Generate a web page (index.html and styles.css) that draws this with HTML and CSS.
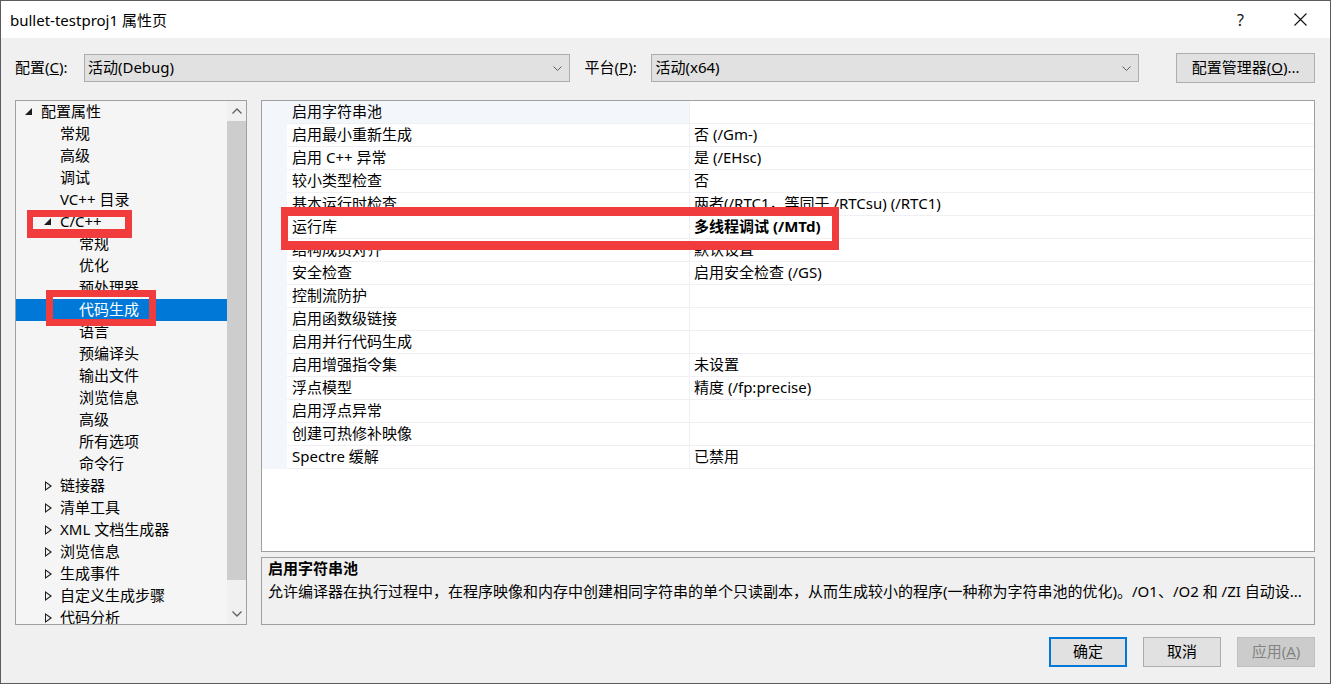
FILE: index.html
```html
<!DOCTYPE html>
<html lang="zh-CN">
<head>
    <meta charset="UTF-8">
    <title>bullet-testproj1 属性页</title>
    <link rel="stylesheet" href="styles.css">
</head>
<body>

<div class="window">
    <div class="titlebar">
        <span class="title">bullet-testproj1 属性页</span>
        <span class="help">?</span>
        <svg class="close" width="13" height="13" viewBox="0 0 13 13"><path d="M0.5 0.5 L12.5 12.5 M12.5 0.5 L0.5 12.5" stroke="#111" stroke-width="1.1" fill="none"/></svg>
    </div>

    <div class="content">
        <!-- config / platform row -->
        <div class="config-row">
            <span class="label label-config">配置(<u>C</u>):</span>
            <div class="combo combo-config">
                <span>活动(Debug)</span>
                <svg width="9" height="5" viewBox="0 0 9 5"><path d="M0.5 0.5 L4.5 4.5 L8.5 0.5" stroke="#606060" fill="none"/></svg>
            </div>
            <span class="label label-platform">平台(<u>P</u>):</span>
            <div class="combo combo-platform">
                <span>活动(x64)</span>
                <svg width="9" height="5" viewBox="0 0 9 5"><path d="M0.5 0.5 L4.5 4.5 L8.5 0.5" stroke="#606060" fill="none"/></svg>
            </div>
            <button class="btn btn-manager">配置管理器(<u>O</u>)...</button>
        </div>

        <div class="main">
            <!-- left tree -->
            <div class="tree">
                <div class="tree-list">
                    <div class="node lv1"><span class="tog open"></span>配置属性</div>
                    <div class="node lv2"><span class="tog"></span>常规</div>
                    <div class="node lv2"><span class="tog"></span>高级</div>
                    <div class="node lv2"><span class="tog"></span>调试</div>
                    <div class="node lv2"><span class="tog"></span>VC++ 目录</div>
                    <div class="node lv2"><span class="tog open"></span>C/C++</div>
                    <div class="node lv3"><span class="tog"></span>常规</div>
                    <div class="node lv3"><span class="tog"></span>优化</div>
                    <div class="node lv3"><span class="tog"></span>预处理器</div>
                    <div class="node lv3 selected"><span class="tog"></span>代码生成</div>
                    <div class="node lv3"><span class="tog"></span>语言</div>
                    <div class="node lv3"><span class="tog"></span>预编译头</div>
                    <div class="node lv3"><span class="tog"></span>输出文件</div>
                    <div class="node lv3"><span class="tog"></span>浏览信息</div>
                    <div class="node lv3"><span class="tog"></span>高级</div>
                    <div class="node lv3"><span class="tog"></span>所有选项</div>
                    <div class="node lv3"><span class="tog"></span>命令行</div>
                    <div class="node lv2"><span class="tog closed"></span>链接器</div>
                    <div class="node lv2"><span class="tog closed"></span>清单工具</div>
                    <div class="node lv2"><span class="tog closed"></span>XML 文档生成器</div>
                    <div class="node lv2"><span class="tog closed"></span>浏览信息</div>
                    <div class="node lv2"><span class="tog closed"></span>生成事件</div>
                    <div class="node lv2"><span class="tog closed"></span>自定义生成步骤</div>
                    <div class="node lv2"><span class="tog closed"></span>代码分析</div>
                </div>
                <div class="scrollbar">
                    <div class="sb-btn">
                        <svg width="10" height="6" viewBox="0 0 10 6"><path d="M0.5 5.5 L5 1 L9.5 5.5" stroke="#606060" stroke-width="1.3" fill="none"/></svg>
                    </div>
                    <div class="sb-track"><div class="sb-thumb"></div></div>
                    <div class="sb-btn">
                        <svg width="10" height="6" viewBox="0 0 10 6"><path d="M0.5 0.5 L5 5 L9.5 0.5" stroke="#606060" stroke-width="1.3" fill="none"/></svg>
                    </div>
                </div>
            </div>

            <!-- right property grid + description -->
            <div class="right">
                <div class="grid">
                    <div class="prop current"><span class="gut"></span><span class="name">启用字符串池</span><span class="val"></span></div>
                    <div class="prop"><span class="gut"></span><span class="name">启用最小重新生成</span><span class="val">否 (/Gm-)</span></div>
                    <div class="prop"><span class="gut"></span><span class="name">启用 C++ 异常</span><span class="val">是 (/EHsc)</span></div>
                    <div class="prop"><span class="gut"></span><span class="name">较小类型检查</span><span class="val">否</span></div>
                    <div class="prop"><span class="gut"></span><span class="name">基本运行时检查</span><span class="val">两者(/RTC1，等同于 /RTCsu) (/RTC1)</span></div>
                    <div class="prop"><span class="gut"></span><span class="name">运行库</span><span class="val bold">多线程调试 (/MTd)</span></div>
                    <div class="prop"><span class="gut"></span><span class="name">结构成员对齐</span><span class="val">默认设置</span></div>
                    <div class="prop"><span class="gut"></span><span class="name">安全检查</span><span class="val">启用安全检查 (/GS)</span></div>
                    <div class="prop"><span class="gut"></span><span class="name">控制流防护</span><span class="val"></span></div>
                    <div class="prop"><span class="gut"></span><span class="name">启用函数级链接</span><span class="val"></span></div>
                    <div class="prop"><span class="gut"></span><span class="name">启用并行代码生成</span><span class="val"></span></div>
                    <div class="prop"><span class="gut"></span><span class="name">启用增强指令集</span><span class="val">未设置</span></div>
                    <div class="prop"><span class="gut"></span><span class="name">浮点模型</span><span class="val">精度 (/fp:precise)</span></div>
                    <div class="prop"><span class="gut"></span><span class="name">启用浮点异常</span><span class="val"></span></div>
                    <div class="prop"><span class="gut"></span><span class="name">创建可热修补映像</span><span class="val"></span></div>
                    <div class="prop"><span class="gut"></span><span class="name">Spectre 缓解</span><span class="val">已禁用</span></div>
                </div>
                <div class="desc">
                    <div class="desc-title">启用字符串池</div>
                    <div class="desc-text">允许编译器在执行过程中，在程序映像和内存中创建相同字符串的单个只读副本，从而生成较小的程序(一种称为字符串池的优化)。/O1、/O2 和 /ZI 自动设...</div>
                </div>
            </div>
        </div>

        <div class="footer">
            <button class="btn btn-ok">确定</button>
            <button class="btn">取消</button>
            <button class="btn btn-disabled">应用(<u>A</u>)</button>
        </div>
    </div>

    <!-- red annotation boxes drawn over the dialog -->
    <div class="mark mark-cpp"></div>
    <div class="mark mark-codegen"></div>
    <div class="mark mark-runtime"></div>
</div>

</body>
</html>
```

FILE: styles.css
```css
body {
    margin: 0;
    background: #ffffff;
    font-family: "Noto Sans", "Noto Sans CJK SC", sans-serif;
    font-size: 15px;
    color: #000000;
}

.window {
    position: relative;
    width: 1331px;
    height: 684px;
    box-sizing: border-box;
    border: 1px solid #5c5c5c;
    background: #f0f0f0;
    display: flex;
    flex-direction: column;
    overflow: hidden;
}

.titlebar {
    height: 37px;
    background: #ffffff;
    display: flex;
    align-items: center;
    padding-left: 9px;
    padding-right: 23px;
}

.title {
    flex: 1;
    font-size: 15px;
    line-height: 20px;
}

.help {
    font-size: 16px;
    margin-right: 50px;
    color: #111;
}

.close {
    display: block;
}

.content {
    flex: 1;
    display: flex;
    flex-direction: column;
    padding: 15px 15px 0 14px;
}

/* top row */
.config-row {
    display: flex;
    align-items: center;
    height: 30px;
}

.label {
    line-height: 20px;
    margin-bottom: 3px;
}

.label-config { width: 69px; }
.label-platform { width: 67px; margin-left: 15px; }

.combo {
    height: 28px;
    box-sizing: border-box;
    background: #e1e1e1;
    border: 1px solid #adadad;
    display: flex;
    align-items: center;
    justify-content: space-between;
    padding: 0 7px 2px 3px;
    line-height: 20px;
}

.combo svg { display: block; margin-top: 2px; }

.combo-config { width: 486px; }
.combo-platform { width: 488px; }

.btn {
    font-family: inherit;
    font-size: 15px;
    color: #000;
    background: #e1e1e1;
    border: 1px solid #adadad;
    height: 30px;
    width: 78px;
    padding: 0 0 3px 0;
    line-height: 20px;
}

.btn-manager {
    width: 139px;
    margin-left: 37px;
}

/* main area */
.main {
    display: flex;
    margin-top: 17px;
    height: 525px;
}

.tree {
    width: 232px;
    box-sizing: border-box;
    border: 1px solid #a0a0a0;
    background: #f5f5f5;
    display: flex;
    overflow: hidden;
}

.tree-list {
    flex: 1;
    overflow: hidden;
}

.node {
    height: 22px;
    line-height: 20px;
    display: flex;
    align-items: flex-start;
    white-space: nowrap;
}

.node.lv1 { padding-left: 9px; }
.node.lv2 { padding-left: 28px; }
.node.lv3 { padding-left: 47px; }

.node.selected {
    background: #0078d7;
    color: #ffffff;
}

.tog {
    width: 16px;
    height: 22px;
    flex: none;
    position: relative;
}

.tog.open::before {
    content: "";
    position: absolute;
    left: 0;
    top: 7px;
    width: 0;
    height: 0;
    border-left: 7px solid transparent;
    border-bottom: 7px solid #1e1e1e;
}

.tog.closed::before {
    content: "";
    position: absolute;
    left: 1px;
    top: 6px;
    width: 0;
    height: 0;
    border-top: 5px solid transparent;
    border-bottom: 5px solid transparent;
    border-left: 7px solid #1e1e1e;
}

.tog.closed::after {
    content: "";
    position: absolute;
    left: 2px;
    top: 8px;
    width: 0;
    height: 0;
    border-top: 3px solid transparent;
    border-bottom: 3px solid transparent;
    border-left: 4px solid #f5f5f5;
}

.scrollbar {
    width: 19px;
    background: #f0f0f0;
    display: flex;
    flex-direction: column;
}

.sb-btn {
    height: 20px;
    display: flex;
    align-items: center;
    justify-content: center;
}

.sb-track {
    flex: 1;
}

.sb-thumb {
    height: 459px;
    background: #cdcdcd;
}

.right {
    flex: 1;
    margin-left: 14px;
    display: flex;
    flex-direction: column;
}

.grid {
    height: 452px;
    box-sizing: border-box;
    border: 1px solid #a0a0a0;
    background: #ffffff;
}

.prop {
    display: grid;
    grid-template-columns: 25px 402px 1fr;
    height: 23px;
    line-height: 20px;
    white-space: nowrap;
}

.prop .gut {
    background: #f3f6fb;
}

.prop .name {
    padding-left: 5px;
    border-bottom: 1px solid #f0f0f4;
}

.prop .val {
    padding-left: 4px;
    border-left: 1px solid #f0f0f4;
    border-bottom: 1px solid #f0f0f4;
    overflow: hidden;
}

.prop.current .name {
    background: #f3f6fb;
}

.bold { font-weight: bold; }

.desc {
    margin-top: 5px;
    height: 68px;
    box-sizing: border-box;
    border: 1px solid #a0a0a0;
    background: #f0f0f0;
    padding: 0 6px;
}

.desc-title {
    font-weight: bold;
    line-height: 21px;
}

.desc-text {
    line-height: 24px;
    white-space: nowrap;
    overflow: hidden;
}

.footer {
    display: flex;
    justify-content: flex-end;
    gap: 16px;
    margin-top: 12px;
}

.btn-ok {
    border: 2px solid #0078d7;
}

.btn-disabled {
    background: #cccccc;
    border-color: #bfbfbf;
    color: #838383;
}

/* annotation boxes */
.mark {
    position: absolute;
    box-sizing: border-box;
    border: 7px solid #f03c3c;
}

.mark-cpp {
    left: 26px;
    top: 209px;
    width: 105px;
    height: 28px;
    border-bottom-width: 9px;
    border-left-width: 6px;
}

.mark-codegen {
    left: 45px;
    top: 289px;
    width: 110px;
    height: 36px;
}

.mark-runtime {
    left: 280px;
    top: 206px;
    width: 558px;
    height: 43px;
    border-top-width: 9px;
    border-bottom-width: 9px;
}
```
